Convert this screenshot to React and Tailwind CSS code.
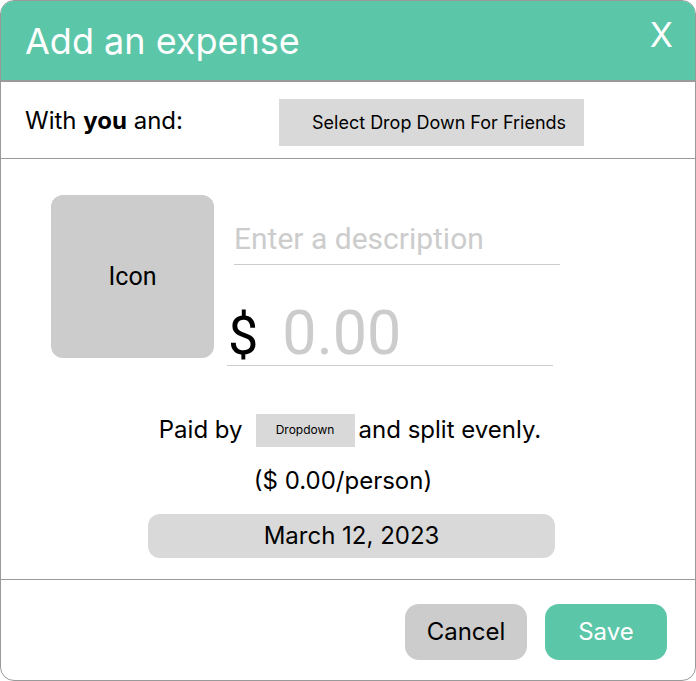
export default function App() {
  return (
    <div className="w-[696px] h-[681px] bg-white font-['Inter',sans-serif]">
      <div className="w-full h-full flex flex-col border border-[#9a9a9a] rounded-[14px] overflow-hidden">
        {/* header */}
        <div className="h-[81px] shrink-0 bg-[#5bc6a8] border-b-2 border-[#9a9a9a] flex items-start justify-between pl-[24px] pr-[22px]">
          <h1 className="text-[36px] leading-none text-white mt-[22px]">Add an expense</h1>
          <span className="text-[34px] leading-none text-white mt-[17px]">X</span>
        </div>

        {/* with row */}
        <div className="h-[77px] shrink-0 border-b border-[#9a9a9a] flex items-center pl-[24px]">
          <p className="text-[24px] leading-none text-black w-[254px] mt-[2px]">
            With <span className="font-bold">you</span> and:
          </p>
          <button className="w-[305px] h-[47px] bg-[#d9d9d9] text-[18px] text-black mt-[5px] text-left pl-[33px]">
            Select Drop Down For Friends
          </button>
        </div>

        {/* body */}
        <div className="flex-1 flex flex-col border-b border-[#9a9a9a]">
          <div className="flex pl-[50px] pt-[36px]">
            <div className="w-[163px] h-[163px] rounded-[12px] bg-[#cccccc] flex items-center justify-center text-[25px] font-['Roboto',sans-serif] text-black">
              Icon
            </div>
            <div className="flex flex-col ml-[13px]">
              <div className="ml-[7px] w-[326px] h-[70px] border-b border-[#cccccc] flex items-end pb-[10px]">
                <span className="text-[30px] leading-none font-['Roboto',sans-serif] text-[#cccccc]">Enter a description</span>
              </div>
              <div className="w-[326px] h-[101px] border-b border-[#cccccc] flex items-baseline pt-[38px] font-['Roboto',sans-serif]">
                <span className="text-[54px] leading-none text-black ml-[1px]">$</span>
                <span className="text-[61px] leading-none text-[#cccccc] ml-[24px]">0.00</span>
              </div>
            </div>
          </div>

          <div className="flex items-center justify-center mt-[46px] text-[24px] text-black pl-[4px]">
            <span>Paid by</span>
            <span className="ml-[13px] w-[99px] h-[33px] bg-[#d9d9d9] flex items-center justify-center text-[12px]">Dropdown</span>
            <span className="ml-[4px]">and split evenly.</span>
          </div>
          <p className="text-center text-[24px] text-black mt-[15px] pr-[10px]">($ 0.00/person)</p>
          <div className="mt-[15px] ml-[147px] w-[407px] h-[44px] rounded-[12px] bg-[#d9d9d9] flex items-center justify-center text-[24px] text-black">
            March 12, 2023
          </div>
        </div>

        {/* footer */}
        <div className="h-[100px] shrink-0 flex items-start justify-end gap-[18px] pr-[28px] pt-[24px]">
          <button className="w-[122px] h-[56px] rounded-[14px] bg-[#cccccc] text-[24px] text-black">Cancel</button>
          <button className="w-[122px] h-[56px] rounded-[14px] bg-[#5bc6a8] text-[24px] text-white">Save</button>
        </div>
      </div>
    </div>
  );
}
